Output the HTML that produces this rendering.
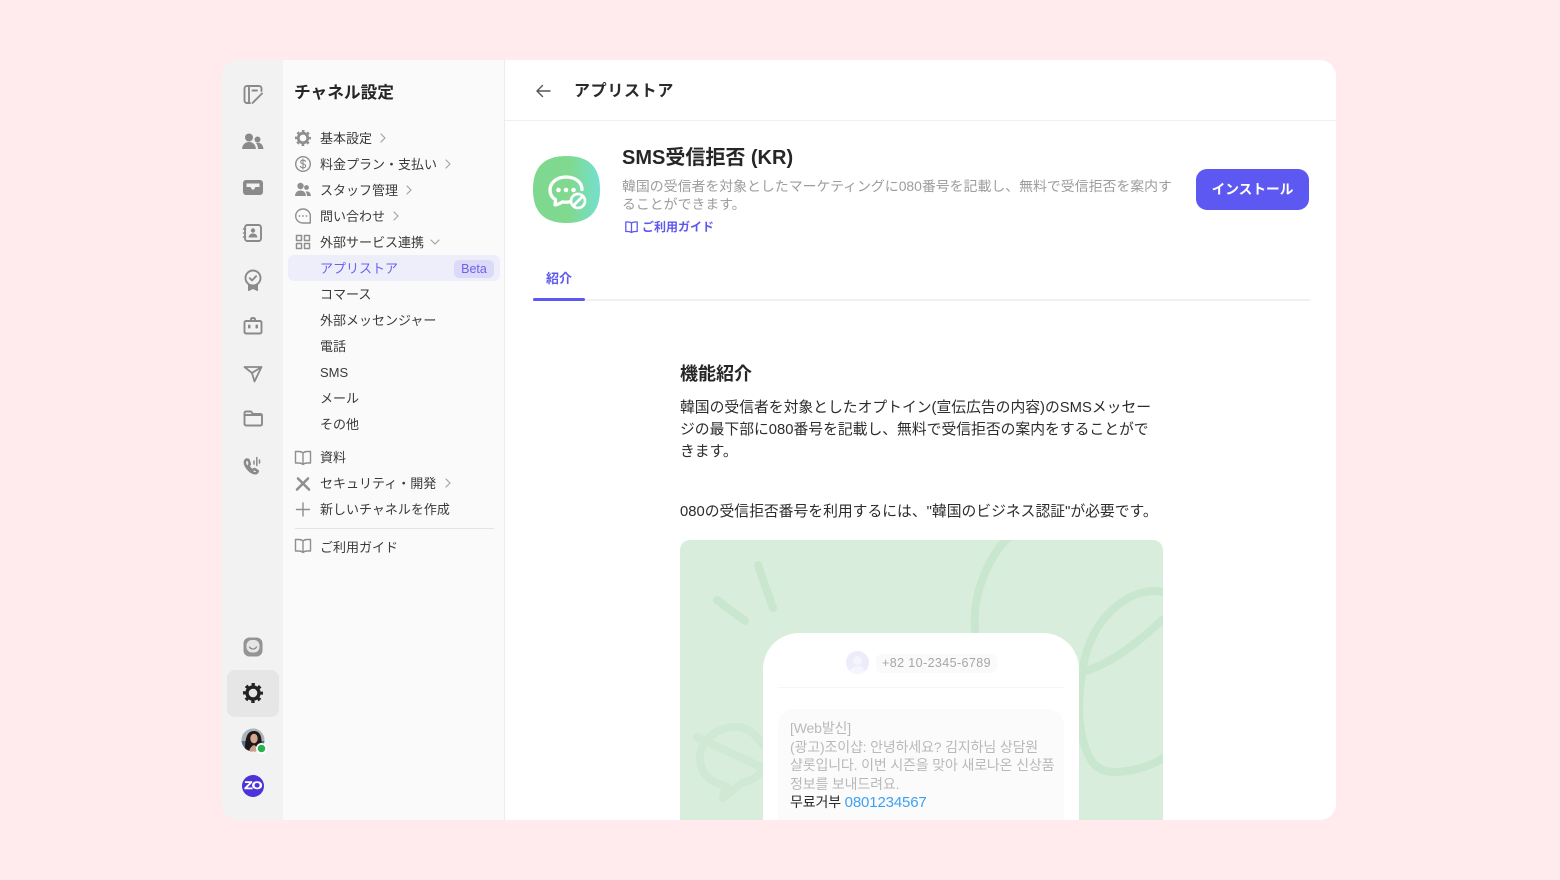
<!DOCTYPE html>
<html lang="ja"><head><meta charset="utf-8"><title>アプリストア</title>
<style>
*{box-sizing:border-box;margin:0;padding:0}
html,body{width:1560px;height:880px;overflow:hidden;background:#ffebee;font-family:"Liberation Sans","Noto Sans CJK JP",sans-serif;color:#2a2a2a}
.a{position:absolute;white-space:nowrap}
.it{position:absolute;left:320px;font-size:13px;line-height:18px;color:#3a3a3a;white-space:nowrap}
svg{position:absolute;overflow:visible}
.r{fill:none;stroke:#8a8a8a;stroke-width:1.900;stroke-linecap:round;stroke-linejoin:round}
.s{fill:none;stroke:#8f8f8f;stroke-width:1.400;stroke-linecap:round;stroke-linejoin:round}
.c{fill:none;stroke:#a3a3a3;stroke-width:1.200;stroke-linecap:round;stroke-linejoin:round}
.p{position:absolute;left:680px;font-size:14.800px;line-height:22px;color:#2c2c2c;white-space:nowrap}
</style></head><body>
<div style="position:absolute;left:222px;top:60px;width:1114px;height:760px;border-radius:16px;overflow:hidden;background:#fff">
<div style="position:absolute;left:0;top:0;width:61px;height:760px;background:#f2f2f2"></div>
<div style="position:absolute;left:61px;top:0;width:222px;height:760px;background:#fafafa;border-right:1px solid #ececec"></div>
<div style="position:absolute;left:283px;top:60px;width:831px;height:1px;background:#efefef"></div>
<div style="position:absolute;left:5px;top:610px;width:52px;height:47px;border-radius:8px;background:#e6e6e6"></div>
</div>

<!-- rail icons -->
<svg class="r" style="left:0;top:0" width="1560" height="880" viewBox="0 0 1560 880">
<path d="M250 103h-3a2.500 2.500 0 0 1-2.500-2.500v-12a2.500 2.500 0 0 1 2.500-2.500h12a2.500 2.500 0 0 1 2.500 2.500v2.500M249 86v17M252.500 90.500h4.500"/>
<path d="M252.500 103l9.500-9.500"/>
<g fill="#8a8a8a" stroke="none"><circle cx="249" cy="137.500" r="4"/><circle cx="257.500" cy="139.500" r="3"/><path d="M242 149c.5-4.800 3.300-7 7-7s6.500 2.200 7 7zM258 149c0-2.500-.8-4.500-2-6 .6-.2 1.300-.3 2-.3 3 0 5 2.200 5.500 6.300z"/>
<path fill-rule="evenodd" d="M246 180h14a3 3 0 0 1 3 3v9a3 3 0 0 1-3 3h-14a3 3 0 0 1-3-3v-9a3 3 0 0 1 3-3zm.5 3.500v3.500h4l1.500 2.500h2l1.500-2.500h4v-3.500z"/></g>
<rect x="245" y="225" width="16" height="16" rx="2.500"/><path d="M243.500 229h2M243.500 233h2M243.500 237h2" stroke-width="1.500"/>
<g fill="#8a8a8a" stroke="none"><circle cx="253" cy="230.500" r="2.200"/><path d="M248.500 237.500c.4-2.800 2.200-4 4.500-4s4.100 1.200 4.500 4z"/></g>
<circle cx="253" cy="278" r="7.500"/><path d="M249.800 278.200l2.300 2.200 4-4.200"/><path d="M248.500 285v5.500l4.500-2 4.500 2V285" fill="#8a8a8a" stroke-width="1"/>
<rect x="244.500" y="321" width="17" height="12.500" rx="1.500"/><path d="M251 319.500c0-1 .8-1.500 2-1.500s2 .5 2 1.500" stroke-width="2"/>
<g fill="#8a8a8a" stroke="none"><rect x="248" y="324.500" width="2.500" height="4" rx="1"/><rect x="255.500" y="324.500" width="2.500" height="4" rx="1"/></g>
<path d="M244.500 367h17l-7 14.500-2.500-8.500zM252 373l9.500-6" stroke-width="1.800"/>
<path d="M244.500 424v-11a1.500 1.500 0 0 1 1.500-1.500h5l2 2.500h7.500a1.500 1.500 0 0 1 1.500 1.500v8.500a1.500 1.500 0 0 1-1.500 1.500h-14.500a1.500 1.500 0 0 1-1.500-1.500zM245 415h15.500"/>
<path stroke-width="2.500" d="M246.500 459.500c-1.900 1-2 3.700-.8 6 1.600 3.200 5 6.800 8.300 7.600 1.900.400 3.300-.3 3.800-2l-3.300-2.200-2 1.300c-1.600-.8-3.300-2.700-4-4.400l1.400-1.600-1.400-4.300z"/>
<path d="M254 461v3M256.800 457.500v8M259.500 460v3" stroke-width="1.500"/>
<rect x="243.500" y="637.500" width="19" height="19" rx="6" fill="#949494" stroke="none"/>
<rect x="246.500" y="640" width="13" height="12.500" rx="5.500" fill="#e6e6e6" stroke="none"/>
<path d="M249.500 647c.8 1.300 2.100 2 3.500 2s2.700-.7 3.500-2" stroke="#8a8a8a" stroke-width="1.300"/>
<!-- rail gear -->
<circle cx="253" cy="693" r="6" stroke="#222" stroke-width="3.400"/>
<circle cx="253" cy="693" r="8.600" stroke="#222" stroke-width="2.800" stroke-linecap="butt" stroke-dasharray="3.300 3.450" stroke-dashoffset="1.650"/>
</svg>
<!-- avatar -->
<svg style="left:241px;top:728px" width="26" height="26" viewBox="0 0 26 26"><defs><clipPath id="av"><circle cx="12" cy="12" r="11.500"/></clipPath></defs><g clip-path="url(#av)"><rect width="24" height="24" fill="#aab4bd"/><rect y="13" width="24" height="11" fill="#5a7188"/><path d="M4 24c0-12 1-21 9-21 6 0 8 6 7.500 12-.2 3-1 6-2.500 9z" fill="#1f1819"/><ellipse cx="13" cy="10.500" rx="3.700" ry="4.800" fill="#d3a88f"/><path d="M8 24c.5-4 3-6 5-7 2 1 4 3 5 7z" fill="#c8a08c"/></g><circle cx="20.500" cy="20.500" r="5.500" fill="#fff"/><circle cx="20.500" cy="20.500" r="3.800" fill="#2bb04f"/></svg>
<!-- zo -->
<div class="a" style="left:242px;top:775px;width:22px;height:22px;border-radius:50%;background:#4a33d8;color:#fff;font-size:11px;font-weight:700;line-height:22px;text-align:center"><span style="display:inline-block;transform:scaleX(1.250);letter-spacing:-.8px;-webkit-text-stroke:.4px #fff">ZO</span></div>

<!-- sidebar -->
<div class="a" style="left:294px;top:82px;font-size:16.700px;line-height:22px;font-weight:700;color:#262626">チャネル設定</div>
<div class="it" style="top:129.500px">基本設定</div>
<div class="it" style="top:155.500px">料金プラン・支払い</div>
<div class="it" style="top:181.500px">スタッフ管理</div>
<div class="it" style="top:207.500px">問い合わせ</div>
<div class="it" style="top:233.500px">外部サービス連携</div>
<div class="a" style="left:288px;top:255px;width:212px;height:26px;border-radius:6px;background:#eeeefb"></div>
<div class="it" style="top:259.500px;color:#6a62f0">アプリストア</div>
<div class="a" style="left:454px;top:259.500px;width:40px;height:18px;border-radius:5px;background:#dcdaf8;color:#6a62f0;font-size:12.500px;line-height:18px;text-align:center">Beta</div>
<div class="it" style="top:285.500px">コマース</div>
<div class="it" style="top:311.500px">外部メッセンジャー</div>
<div class="it" style="top:337.500px">電話</div>
<div class="it" style="top:363.500px">SMS</div>
<div class="it" style="top:389.500px">メール</div>
<div class="it" style="top:415.500px">その他</div>
<div class="it" style="top:449px">資料</div>
<div class="it" style="top:475px">セキュリティ・開発</div>
<div class="it" style="top:501px">新しいチャネルを作成</div>
<div class="a" style="left:295px;top:528px;width:199px;height:1px;background:#e4e4e4"></div>
<div class="it" style="top:539px">ご利用ガイド</div>

<svg class="s" style="left:0;top:0" width="1560" height="880" viewBox="0 0 1560 880">
<circle cx="303" cy="138" r="4.800" stroke-width="2.800"/>
<circle cx="303" cy="138" r="6.800" stroke-width="2.400" stroke-linecap="butt" stroke-dasharray="2.600 2.740" stroke-dashoffset="1.300"/>
<circle cx="303" cy="164" r="7.300"/><path d="M305.500 161.500c-.4-1-1.300-1.300-2.500-1.300-1.300 0-2.300.7-2.300 1.800 0 2.500 5 1.300 5 3.900 0 1.100-1.100 1.900-2.700 1.900-1.200 0-2.200-.5-2.600-1.400M303 159v10" stroke-width="1.100"/>
<g fill="#8f8f8f" stroke="none"><circle cx="300.500" cy="186" r="3.200"/><circle cx="306.500" cy="187.500" r="2.400"/><path d="M295 196c.3-3.800 2.500-5.500 5.500-5.500s5.200 1.700 5.500 5.500zM307 196c0-1.800-.5-3.300-1.500-4.400.4-.2.900-.2 1.400-.2 2.300 0 3.800 1.600 4.100 4.600z"/>
<circle cx="299.500" cy="216" r=".9"/><circle cx="303" cy="216" r=".9"/><circle cx="306.500" cy="216" r=".9"/></g>
<path d="M303 209c4 0 7.300 3.100 7.300 7v7h-7.300c-4 0-7.300-3.100-7.300-7s3.300-7 7.300-7z"/>
<rect x="296.500" y="235.500" width="5" height="5" stroke-width="1.500"/><rect x="304.500" y="235.500" width="5" height="5" stroke-width="1.500"/><rect x="296.500" y="243.500" width="5" height="5" stroke-width="1.500"/><rect x="304.500" y="243.500" width="5" height="5" stroke-width="1.500"/>
<path d="M303 453c-1-1-2.500-1.500-4-1.500h-3.500v11.500h3.500c1.500 0 3 .5 4 1.500 1-1 2.500-1.500 4-1.500h3.500v-11.500h-3.500c-1.500 0-3 .5-4 1.500zM303 453v11.500"/>
<path d="M303 541c-1-1-2.500-1.500-4-1.500h-3.500v11.500h3.500c1.500 0 3 .5 4 1.500 1-1 2.500-1.500 4-1.500h3.500v-11.500h-3.500c-1.500 0-3 .5-4 1.500zM303 541v11.500"/>
<path d="M298 478.500l11 11M308 478.500l-11 11" stroke-width="2.600"/>
<path d="M303 503v13M296.500 509.500h13"/>
<g class="c"><path d="M381 134l4 4-4 4M446 160l4 4-4 4M407 186l4 4-4 4M394 212l4 4-4 4M431 240l4 4 4-4M446 479l4 4-4 4"/></g>
</svg>

<!-- header -->
<svg style="left:535px;top:83px" width="18" height="16" viewBox="0 0 18 16"><path d="M15 8H2M7.500 2.500L2 8l5.500 5.500" fill="none" stroke="#555" stroke-width="1.400" stroke-linecap="round" stroke-linejoin="round"/></svg>
<div class="a" style="left:574px;top:81px;font-size:16px;line-height:22px;font-weight:700;color:#2a2a2a;letter-spacing:.67px">アプリストア</div>

<!-- app head -->
<svg style="left:533px;top:156px" width="67" height="67" viewBox="0 0 67 67"><defs><linearGradient id="g" x1="0" x2="1" y1="0" y2="0"><stop offset="0" stop-color="#7ed88f"/><stop offset=".55" stop-color="#80d98f"/><stop offset="1" stop-color="#74e0cf"/></linearGradient></defs>
<path d="M33.500 0C56 0 67 11 67 33.500S56 67 33.500 67 0 56 0 33.500 11 0 33.500 0z" fill="url(#g)"/>
<path d="M33 21c-9 0-16 5.500-16 13 0 4 2 7.500 5.500 9.800l-.5 5c2.500 0 5.500-1.600 7.500-2.900 1.100.2 2.300.3 3.500.3 2.500 0 5-.4 7-1.200" fill="none" stroke="#fff" stroke-width="3.300" stroke-linecap="round" stroke-linejoin="round"/><path d="M33 21c9 0 16 5 16 12.500" fill="none" stroke="#fff" stroke-width="3.300" stroke-linecap="round"/>
<g fill="#fff"><circle cx="25.500" cy="34" r="2.300"/><circle cx="33" cy="34" r="2.300"/><circle cx="40.500" cy="34" r="2.300"/></g>
<circle cx="45" cy="45" r="7" fill="#7cd9b0" stroke="#fff" stroke-width="2.700"/><path d="M40.500 49.500l9-9" stroke="#fff" stroke-width="2.700"/></svg>
<div class="a" style="left:622px;top:145px;font-size:20px;line-height:26px;font-weight:700;color:#262626">SMS受信拒否 (KR)</div>
<div class="a" style="left:622px;top:177px;font-size:13.900px;line-height:18px;color:#9d9d9d">韓国の受信者を対象としたマーケティングに080番号を記載し、無料で受信拒否を案内す<br>ることができます。</div>
<svg style="left:625px;top:221px" width="13" height="13" viewBox="0 0 13 13"><path d="M6.500 2C5.500 1.300 4.500 1 3 1H.8v9.500H3c1.500 0 2.500.3 3.500 1 1-.7 2-1 3.500-1h2.200V1H10c-1.500 0-2.500.3-3.500 1zM6.500 2v9.500" fill="none" stroke="#5f58ee" stroke-width="1.300" stroke-linejoin="round"/></svg>
<div class="a" style="left:642px;top:219px;font-size:12px;line-height:17px;font-weight:700;color:#5f58ee">ご利用ガイド</div>
<div class="a" style="left:1196px;top:169px;width:113px;height:41px;border-radius:11px;background:#5e58f2;color:#fff;font-size:13.700px;font-weight:700;line-height:42px;text-align:center">インストール</div>

<!-- tabs -->
<div class="a" style="left:546px;top:270px;font-size:13px;line-height:18px;font-weight:700;color:#5f58ee">紹介</div>
<div class="a" style="left:533px;top:299px;width:777px;height:2px;background:#f1f1f1"></div>
<div class="a" style="left:533px;top:298px;width:52px;height:3px;border-radius:2px;background:#5e58f2"></div>

<!-- content -->
<div class="a" style="left:680px;top:361px;font-size:18px;line-height:26px;font-weight:700;color:#262626">機能紹介</div>
<div class="p" style="top:397px">韓国の受信者を対象としたオプトイン(宣伝広告の内容)のSMSメッセー</div>
<div class="p" style="top:419px">ジの最下部に080番号を記載し、無料で受信拒否の案内をすることがで</div>
<div class="p" style="top:441px">きます。</div>
<div class="p" style="top:501px">080の受信拒否番号を利用するには、"韓国のビジネス認証"が必要です。</div>

<!-- illustration -->
<div style="position:absolute;left:680px;top:540px;width:483px;height:280px;border-radius:10px 10px 0 0;background:#d8eddc;overflow:hidden">
<svg style="left:0;top:0" width="483" height="280" viewBox="0 0 483 280"><g fill="none" stroke="#c9e6cf" stroke-width="8" stroke-linecap="round" stroke-linejoin="round">
<path d="M78 25l15 43M37 60l28 21"/>
<path d="M330 -4c-16 14-38 50-35 94"/>
<path d="M483 52c-6-2-22-2-38 8-22 14-38 38-43 72 22-6 46-20 80-52M402 132c-4 30-6 66 11 91 8 8 16 9 20 9 16 0 34-4 50-14"/>
<g stroke="#cfe9d5"><path d="M17 197l66 31"/><path d="M83 205C75 192 65 187 57 187 35 187 20 202 20 218c0 15 10 25 26 28l-3 12 19-15c8-2 14-5 18-10"/></g>
</g></svg>
<div style="position:absolute;left:83px;top:93px;width:316px;height:230px;border-radius:36px;background:#fff"></div>
<div style="position:absolute;left:98px;top:147px;width:286px;height:1px;background:#f6f6f6"></div>
<div style="position:absolute;left:166px;top:111px;width:23px;height:23px;border-radius:50%;background:#ececfb;overflow:hidden"><div style="position:absolute;left:7px;top:5px;width:9px;height:9px;border-radius:50%;background:#f5f5fd"></div><div style="position:absolute;left:4px;top:15px;width:15px;height:12px;border-radius:50%;background:#f5f5fd"></div></div>
<div class="a" style="left:196px;top:114px;width:121px;height:19px;border-radius:6px;background:#fafafa;color:#a6a6a6;font-size:12.500px;line-height:19px;text-align:center;letter-spacing:.4px">+82 10-2345-6789</div>
<div style="position:absolute;left:98px;top:169px;width:286px;height:130px;border-radius:16px;background:#fbfbfb"></div>
<div class="a" style="left:110px;top:179px;font-size:14px;line-height:18.500px;color:#b9b9b9;font-family:'Liberation Sans','Noto Sans CJK KR',sans-serif;letter-spacing:-.15px">[Web발신]<br>(광고)조이샵: 안녕하세요? 김지하님 상담원<br>샬롯입니다. 이번 시즌을 맞아 새로나온 신상품<br>정보를 보내드려요.<br><span style="color:#2a2a2a">무료거부</span> <span style="color:#3ea0f2;font-size:15px">0801234567</span></div>
</div>
</body></html>
